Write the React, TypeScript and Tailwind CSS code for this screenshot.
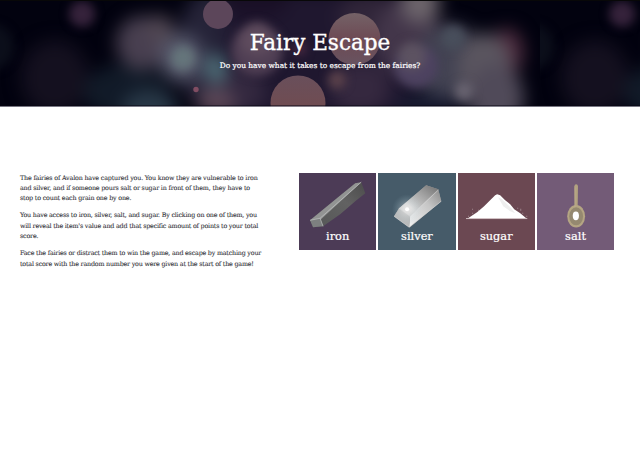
import type { ReactNode } from 'react';

function Bokeh() {
  return (
    <svg className="absolute inset-0 h-full w-full" viewBox="0 0 640 107" preserveAspectRatio="none" aria-hidden="true">
      <defs>
        <filter id="soft" x="-60%" y="-60%" width="220%" height="220%" colorInterpolationFilters="sRGB"><feGaussianBlur stdDeviation="8.5" /></filter>
        <filter id="mid" x="-60%" y="-60%" width="220%" height="220%" colorInterpolationFilters="sRGB"><feGaussianBlur stdDeviation="5" /></filter>
        <filter id="crisp" x="-20%" y="-20%" width="140%" height="140%" colorInterpolationFilters="sRGB"><feGaussianBlur stdDeviation="0.5" /></filter>
        <linearGradient id="peach" x1="0" y1="0" x2="0" y2="1">
          <stop offset="0" stopColor="#746267" />
          <stop offset="0.5" stopColor="#6d4a54" />
          <stop offset="1" stopColor="#685360" />
        </linearGradient>
        <linearGradient id="rust" x1="0" y1="0" x2="0" y2="1">
          <stop offset="0" stopColor="#694f5b" />
          <stop offset="0.6" stopColor="#704c51" />
        </linearGradient>
        <clipPath id="tile"><rect width="540" height="107" /></clipPath>
        <g id="scene" clipPath="url(#tile)">
          <rect width="540" height="107" fill="#02020f" />
          <g filter="url(#soft)">
            <ellipse cx="55" cy="78" rx="34" ry="38" fill="#14101f" />
            <ellipse cx="125" cy="92" rx="42" ry="28" fill="#111a28" />
            <ellipse cx="150" cy="108" rx="28" ry="18" fill="#283847" />
            <ellipse cx="212" cy="50" rx="36" ry="60" fill="#252338" />
            <rect x="225" y="-10" width="190" height="130" fill="#1f172f" />
            <ellipse cx="255" cy="3" rx="34" ry="16" fill="#1a1027" />
            <ellipse cx="232" cy="92" rx="34" ry="24" fill="#33283f" />
            <ellipse cx="370" cy="18" rx="32" ry="26" fill="#302539" />
            <ellipse cx="360" cy="88" rx="30" ry="26" fill="#35283f" />
            <ellipse cx="408" cy="38" rx="35" ry="38" fill="#43364a" />
            <ellipse cx="450" cy="65" rx="34" ry="42" fill="#424252" />
            <ellipse cx="425" cy="105" rx="30" ry="12" fill="#171a30" />
            <ellipse cx="507" cy="52" rx="17" ry="24" fill="#4c2a3d" />
            <ellipse cx="485" cy="69" rx="27" ry="36" fill="#5a555f" />
            <ellipse cx="496" cy="98" rx="28" ry="34" fill="#504a59" />
            <ellipse cx="142" cy="43" rx="26" ry="27" fill="#483f50" />
            <ellipse cx="160" cy="30" rx="14" ry="15" fill="#504652" />
            <ellipse cx="181" cy="58" rx="22" ry="25" fill="#55576a" />
            <ellipse cx="216" cy="69" rx="11" ry="16" fill="#4e7079" />
            <ellipse cx="216" cy="102" rx="20" ry="13" fill="#5c4757" />
            <ellipse cx="420" cy="3" rx="20" ry="20" fill="#6c646b" />
          </g>
          <g filter="url(#mid)">
            <circle cx="82" cy="14" r="13" fill="#35223b" />
            <circle cx="183" cy="58" r="12" fill="#65757b" />
            <circle cx="257" cy="50" r="26" fill="#503f54" />
            <circle cx="257" cy="39" r="17" fill="#5e4b5d" />
            <circle cx="416" cy="66" r="22" fill="#4d4260" />
            <circle cx="412" cy="56" r="14" fill="#5c5261" />
            <circle cx="453" cy="38" r="12" fill="#484e5b" />
            <circle cx="464" cy="91" r="9" fill="#686370" />
            <circle cx="337" cy="80" r="9" fill="#5a414a" />
            <circle cx="300" cy="49" r="6" fill="#502c45" />
            <circle cx="-9" cy="47" r="23" fill="#0b0e1a" />
          </g>
          <g filter="url(#crisp)">
            <circle cx="218" cy="14" r="15" fill="#5c465a" />
            <circle cx="354.5" cy="39" r="26" fill="url(#peach)" />
            <circle cx="298" cy="103" r="27.5" fill="url(#rust)" />
            <circle cx="196" cy="89.5" r="2.7" fill="#804d62" />
          </g>
        </g>
      </defs>
      <use href="#scene" />
      <use href="#scene" x="540" />
      <rect width="640" height="1" fill="#080808" />
      <rect y="105.5" width="640" height="1" fill="#080612" />
      <rect y="106.3" width="640" height="0.7" fill="#a9a8b3" />
    </svg>
  );
}

function Iron() {
  return (
    <svg className="h-full w-full" viewBox="0 0 77 77">
      <defs><linearGradient id="ironSide" x1="0" y1="1" x2="1" y2="0"><stop stopColor="#545656" /><stop offset="0.6" stopColor="#626262" /><stop offset="1" stopColor="#4b4b4b" /></linearGradient></defs>
      <path d="M11 47 56 10 62 9 66 20 56 28 48 35 41 41 24 53 14 54Z" fill="url(#ironSide)" />
      <path d="M11 47 56 10 62 9 22 46Z" fill="#929493" />
      <path d="M11 47 21 45 24 53 14 54Z" fill="#7d8080" />
      <path d="M11 47 21 45 24 53M21 45 62 9" fill="none" stroke="#c0c2c1" strokeWidth=".7" />
    </svg>
  );
}

function Silver() {
  return (
    <svg className="h-full w-full" viewBox="0 0 77 77">
      <defs>
        <linearGradient id="silverTop" x1="0" y1="1" x2="1" y2="0"><stop stopColor="#cacaca" /><stop offset=".3" stopColor="#d3d3d3" /><stop offset=".65" stopColor="#a2a2a2" /><stop offset="1" stopColor="#707070" /></linearGradient>
        <linearGradient id="silverSide" x1="0" y1="1" x2="1" y2="0"><stop stopColor="#f2f2f2" /><stop offset=".6" stopColor="#c5c5c5" /><stop offset="1" stopColor="#888" /></linearGradient>
        <radialGradient id="glow"><stop stopColor="#fff" /><stop offset=".25" stopColor="#fff" stopOpacity=".65" /><stop offset="1" stopColor="#9fc5d2" stopOpacity="0" /></radialGradient>
      </defs>
      <path d="M16 43 21 35 48 12 60 16 63 28 32 54 31 54Z" fill="#999" />
      <path d="M21 35 48 12 60 16 32 43Z" fill="url(#silverTop)" />
      <path d="M32 43 60 16 63 28 31 54Z" fill="url(#silverSide)" />
      <path d="M16 43 21 35 32 43 31 54Z" fill="#b9b9b9" />
      <path d="M16 43 31 54 63 28M21 35 32 43 60 17" fill="none" stroke="#e1e1e1" strokeWidth=".5" />
      <circle cx="29" cy="36" r="15" fill="url(#glow)" opacity=".5" />
      <circle cx="29" cy="36" r="2" fill="white" />
    </svg>
  );
}

function Sugar() {
  return (
    <svg className="h-full w-full" viewBox="0 0 77 77">
      <path d="M10 45 19 39 26 33 31 28 37 22 39 21 42 22 47 27 52 31 56 36 62 40 68 45Z" fill="white" />
      <path d="M40 24 44 26 49 31 53 35 57 40 52 38 45 33Z" fill="#eeeeee" />
      <path d="M8 45.3H69" stroke="#e7dbdd" strokeWidth=".8" />
      <path d="M10 43h1m3-3h1m-1-4h1m5 1h1m38-2h1m2 2h1m1 3h1m-3-4h1m5 7h1" stroke="#bba9ad" strokeWidth=".7" />
    </svg>
  );
}

function Salt() {
  return (
    <svg className="h-full w-full" viewBox="0 0 77 77">
      <path d="M37.2 13Q37.4 11 39 11T40.8 13L40.5 34H37.5Z" fill="#b2a280" />
      <ellipse cx="39" cy="43" rx="8.9" ry="11.3" fill="#b4a583" />
      <ellipse cx="39" cy="43" rx="6.9" ry="9" fill="#958970" />
      <ellipse cx="38.7" cy="42.6" rx="3.1" ry="4.4" fill="white" />
      <path d="M37.8 14V34" stroke="#c5b795" strokeWidth=".5" />
    </svg>
  );
}

function Tile({ color, name, children }: { color: string; name: string; children: ReactNode }) {
  return (
    <button className={`relative h-[77.5px] w-[77.3px] ${color}`}>
      {children}
      <span className="absolute inset-x-0 top-[56px] text-center text-[11.4px] leading-[15px] text-white [-webkit-text-stroke:0.2px_white]">{name}</span>
    </button>
  );
}

export default function App() {
  return (
    <div className="h-[460px] overflow-hidden bg-white font-['DejaVu_Serif',serif]">
      <header className="relative h-[107px] overflow-hidden text-center text-white">
        <Bokeh />
        <div className="relative pt-[29px]">
          <h1 className="text-[21.5px] leading-[28px] [-webkit-text-stroke:0.35px_white]">Fairy Escape</h1>
          <p className="mt-[4px] text-[7.45px] leading-[10px] [-webkit-text-stroke:0.2px_white]">Do you have what it takes to escape from the fairies?</p>
        </div>
      </header>
      <main className="flex pt-[65.5px]">
        <section className="w-[299px] space-y-[7px] pl-[20px] text-[6.35px] leading-[10.33px] whitespace-nowrap text-[#35353b] [-webkit-text-stroke:0.1px_#35353b]">
          <p className="tracking-[-0.17px]">The fairies of Avalon have captured you. You know they are vulnerable to iron<br />and silver, and if someone pours salt or sugar in front of them, they have to<br />stop to count each grain one by one.</p>
          <p className="tracking-[-0.195px]">You have access to iron, silver, salt, and sugar. By clicking on one of them, you<br />will reveal the item's value and add that specific amount of points to your total<br />score.</p>
          <p className="tracking-[-0.195px]">Face the fairies or distract them to win the game, and escape by matching your<br />total score with the random number you were given at the start of the game!</p>
        </section>
        <section className="flex gap-[2px]">
          <Tile color="bg-[#4c3b56]" name="iron"><Iron /></Tile>
          <Tile color="bg-[#465b69]" name="silver"><Silver /></Tile>
          <Tile color="bg-[#6b4852]" name="sugar"><Sugar /></Tile>
          <Tile color="bg-[#735b77]" name="salt"><Salt /></Tile>
        </section>
      </main>
    </div>
  );
}
